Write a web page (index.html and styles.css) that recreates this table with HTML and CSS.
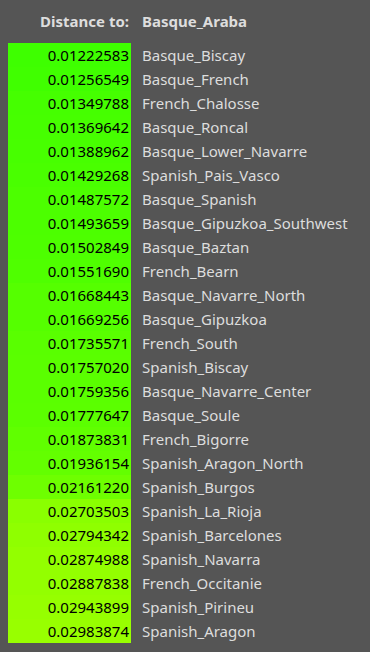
FILE: index.html
```html
<!DOCTYPE html>
<html>
<head>
<meta charset="utf-8">
<link rel="stylesheet" href="styles.css">
</head>
<body>
<div class="dist">
  <div class="head num">Distance to:</div>
  <div class="head name">Basque_Araba</div>

  <div class="num" style="background:rgb(62,255,0)">0.01222583</div><div class="name">Basque_Biscay</div>
  <div class="num" style="background:rgb(64,255,0)">0.01256549</div><div class="name">Basque_French</div>
  <div class="num" style="background:rgb(69,255,0)">0.01349788</div><div class="name">French_Chalosse</div>
  <div class="num" style="background:rgb(70,255,0)">0.01369642</div><div class="name">Basque_Roncal</div>
  <div class="num" style="background:rgb(71,255,0)">0.01388962</div><div class="name">Basque_Lower_Navarre</div>
  <div class="num" style="background:rgb(73,255,0)">0.01429268</div><div class="name">Spanish_Pais_Vasco</div>
  <div class="num" style="background:rgb(76,255,0)">0.01487572</div><div class="name">Basque_Spanish</div>
  <div class="num" style="background:rgb(76,255,0)">0.01493659</div><div class="name">Basque_Gipuzkoa_Southwest</div>
  <div class="num" style="background:rgb(77,255,0)">0.01502849</div><div class="name">Basque_Baztan</div>
  <div class="num" style="background:rgb(79,255,0)">0.01551690</div><div class="name">French_Bearn</div>
  <div class="num" style="background:rgb(85,255,0)">0.01668443</div><div class="name">Basque_Navarre_North</div>
  <div class="num" style="background:rgb(85,255,0)">0.01669256</div><div class="name">Basque_Gipuzkoa</div>
  <div class="num" style="background:rgb(89,255,0)">0.01735571</div><div class="name">French_South</div>
  <div class="num" style="background:rgb(90,255,0)">0.01757020</div><div class="name">Spanish_Biscay</div>
  <div class="num" style="background:rgb(90,255,0)">0.01759356</div><div class="name">Basque_Navarre_Center</div>
  <div class="num" style="background:rgb(91,255,0)">0.01777647</div><div class="name">Basque_Soule</div>
  <div class="num" style="background:rgb(96,255,0)">0.01873831</div><div class="name">French_Bigorre</div>
  <div class="num" style="background:rgb(99,255,0)">0.01936154</div><div class="name">Spanish_Aragon_North</div>
  <div class="num" style="background:rgb(110,255,0)">0.02161220</div><div class="name">Spanish_Burgos</div>
  <div class="num" style="background:rgb(138,255,0)">0.02703503</div><div class="name">Spanish_La_Rioja</div>
  <div class="num" style="background:rgb(143,255,0)">0.02794342</div><div class="name">Spanish_Barcelones</div>
  <div class="num" style="background:rgb(147,255,0)">0.02874988</div><div class="name">Spanish_Navarra</div>
  <div class="num" style="background:rgb(147,255,0)">0.02887838</div><div class="name">French_Occitanie</div>
  <div class="num" style="background:rgb(150,255,0)">0.02943899</div><div class="name">Spanish_Pirineu</div>
  <div class="num" style="background:rgb(152,255,0)">0.02983874</div><div class="name">Spanish_Aragon</div>
</div>
</body>
</html>
```

FILE: styles.css
```css
html, body {
  background: #555555;
}
body {
  margin: 8px;
  font-family: "Noto Sans", "Open Sans", sans-serif;
  font-size: 15px;
  line-height: 24px;
  color: #dddddd;
}
.dist {
  display: grid;
  grid-template-columns: 123px auto;
}
.num {
  text-align: right;
  padding-right: 2px;
  color: #000000;
  white-space: nowrap;
}
.name {
  padding-left: 11px;
  white-space: nowrap;
}
.head {
  font-weight: bold;
  color: #dddddd;
  padding-top: 1px;
  padding-bottom: 10px;
}
```
